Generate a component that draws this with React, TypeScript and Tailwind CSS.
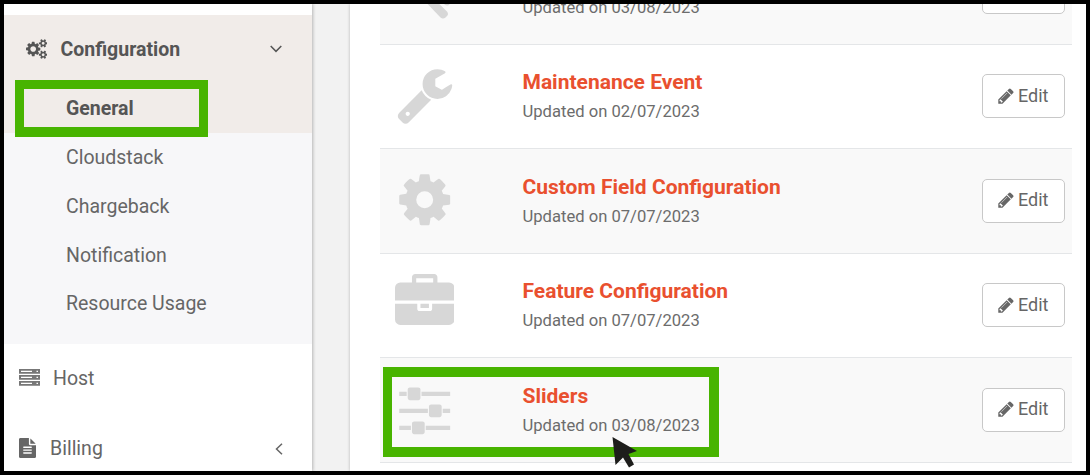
import type { ReactNode } from "react";

const WRENCH =
  "M448 1472q0-26-19-45t-45-19-45 19-19 45 19 45 45 19 45-19 19-45zm644-420l-682 682q-37 37-90 37-52 0-91-37l-106-108q-38-36-38-90 0-53 38-91l681-681q39 98 114.5 173.500t173.500 114.500zm634-435q0 39-23 106-47 134-164.500 217.500t-258.500 83.500q-185 0-316.500-131.500t-131.500-316.500 131.500-316.500 316.500-131.500q58 0 121.500 16.500t107.500 46.500q16 11 16 28t-16 28l-293 169v224l193 107q5-3 79-48.500t135.500-81 70.500-35.500q15 0 23.500 10t8.500 25z";
const COG =
  "M1152 896q0-106-75-181t-181-75-181 75-75 181 75 181 181 75 181-75 75-181zm512-109v222q0 12-8 23t-20 13l-185 28q-19 54-39 91 35 50 107 138 10 12 10 25t-9 23q-27 37-99 108t-94 71q-12 0-26-9l-138-108q-44 23-91 38-16 136-29 186-7 28-36 28h-222q-14 0-24.500-8.500t-11.500-21.500l-28-184q-49-16-90-37l-141 107q-10 9-25 9-14 0-25-11-126-114-165-168-7-10-7-23 0-12 8-23 15-21 51-66.500t54-70.500q-27-50-41-99l-183-27q-13-2-21-12.500t-8-23.500v-222q0-12 8-23t19-13l186-28q14-46 39-92-40-57-107-138-10-12-10-24 0-10 9-23 26-36 98.500-107.500t94.500-71.500q13 0 26 10l138 107q44-23 91-38 16-136 29-186 7-28 36-28h222q14 0 24.500 8.500t11.500 21.500l28 184q49 16 90 37l142-107q9-9 24-9 13 0 25 10 129 119 165 170 7 8 7 22 0 12-8 23-15 21-51 66.500t-54 70.500q26 50 41 98l183 28q13 2 21 12.500t8 23.500z";
const BRIEFCASE =
  "M640 256h512v-128h-512v128zm1152 640v480q0 66-47 113t-113 47h-1472q-66 0-113-47t-47-113v-480h672v160q0 26 19 45t45 19h320q26 0 45-19t19-45v-160h672zm-768 0v128h-256v-128h256zm768-480v384h-1792v-384q0-66 47-113t113-47h352v-160q0-40 28-68t68-28h576q40 0 68 28t28 68v160h352q66 0 113 47t47 113z";
const SLIDERS =
  "M480 1408v128h-352v-128h352zm352-128q26 0 45 19t19 45v256q0 26-19 45t-45 19h-256q-26 0-45-19t-19-45v-256q0-26 19-45t45-19h256zm160-384v128h-864v-128h864zm-640-512v128h-224v-128h224zm1312 1024v128h-736v-128h736zm-960-1152q26 0 45 19t19 45v256q0 26-19 45t-45 19h-256q-26 0-45-19t-19-45v-256q0-26 19-45t45-19h256zm640 512q26 0 45 19t19 45v256q0 26-19 45t-45 19h-256q-26 0-45-19t-19-45v-256q0-26 19-45t45-19h256zm320 128v128h-224v-128h224zm0-512v128h-864v-128h864z";
const PENCIL =
  "M491 1536l91-91-235-235-91 91v107h128v128h107zm523-928q0-22-22-22-10 0-17 7l-542 542q-7 7-7 17 0 22 22 22 10 0 17-7l542-542q7-7 7-17zm-54-192l416 416-832 832h-416v-416zm683 96q0 53-37 90l-166 166-416-416 166-165q36-38 90-38 53 0 91 38l235 234q37 39 37 91z";
const FILE =
  "M1596 476q14 14 28 36h-472v-472q22 14 36 28zm-476 164h544v1056q0 40-28 68t-68 28h-1344q-40 0-68-28t-28-68v-1600q0-40 28-68t68-28h800v544q0 40 28 68t68 28zM1280 1376v-64q0-14-9-23t-23-9h-704q-14 0-23 9t-9 23v64q0 14 9 23t23 9h704q14 0 23-9t9-23zM1280 1120v-64q0-14-9-23t-23-9h-704q-14 0-23 9t-9 23v64q0 14 9 23t23 9h704q14 0 23-9t9-23zM1280 864v-64q0-14-9-23t-23-9h-704q-14 0-23 9t-9 23v64q0 14 9 23t23 9h704q14 0 23-9t9-23z";
const BIG_GEAR =
  "M896 896q0-106-75-181t-181-75-181 75-75 181 75 181 181 75 181-75 75-181zM1280 805v185q0 10-7 19.500t-16 10.500l-155 24q-11 35-32 76 34 48 90 115 7 11 7 20 0 12-7 19-23 30-82.500 89.500t-78.500 59.500q-11 0-21-7l-115-90q-37 19-77 31-11 108-23 155-7 24-30 24h-186q-11 0-20-7.500t-10-17.500l-23-153q-34-10-75-31l-118 89q-7 7-20 7-11 0-21-8-144-133-144-160 0-9 7-19 10-14 41-53t47-61q-23-44-35-82l-152-24q-10-1-17-9.500t-7-19.500v-185q0-10 7-19.500t16-10.500l155-24q11-35 32-76-34-48-90-115-7-11-7-20 0-12 7-20 22-30 82-89t79-59q11 0 21 7l115 90q34-18 77-32 11-108 23-154 7-24 30-24h186q11 0 20 7.500t10 17.500l23 153q34 10 75 31l118-89q8-7 20-7 11 0 21 8 144 133 144 160 0 8-7 19-12 16-42 54t-45 60q23 48 34 82l152 23q10 2 17 10.500t7 19.500z";
const SMALL_GEAR =
  "M1664 1408q0-52-38-90t-90-38-90 38-38 90q0 53 37.500 90.500t90.500 37.500 90.500-37.500 37.500-90.500zM1920 1338v140q0 16-149 31-12 27-30 52 51 113 51 138 0 4-4 7-122 71-124 71-8 0-46-47t-52-68q-20 2-30 2t-30-2q-14 21-52 68t-46 47q-2 0-124-71-4-3-4-7 0-25 51-138-18-25-30-52-149-15-149-31v-140q0-16 149-31 13-29 30-52-51-113-51-138 0-4 4-7 4-2 35-20t59-34 30-16q8 0 46 46.500t52 67.500q20-2 30-2t30 2q51-71 92-112l6-2q4 0 124 70 4 3 4 7 0 25-51 138 17 23 30 52 149 15 149 31z";

function Icon({ d, className }: { d: string; className: string }) {
  return (
    <svg viewBox="0 0 1792 1792" className={className} fill="currentColor">
      <path fillRule="evenodd" d={d} />
    </svg>
  );
}

function ToolHandle() {
  return (
    <svg viewBox="0 0 60 60" className="size-[60px]" fill="currentColor">
      <path d="M23 33 32 31 52 50.500q2 2.500 0 4.500l-1.500 1.500q-2.500 2-5 0zM48 40h6.500v3.500q-2 2-5 0z" />
    </svg>
  );
}

function EditButton({ raised }: { raised?: boolean }) {
  return (
    <button
      className={
        raised
          ? "flex h-11 w-[83px] items-center rounded-[5px] border border-[#c8c8c8] bg-white pb-[2px] pl-[14px] text-[#666]"
          : "flex h-11 w-[83px] items-center rounded-[5px] border border-[#c8c8c8] bg-white pl-[14px] text-[#666]"
      }
    >
      <Icon d={PENCIL} className="size-[18px] shrink-0" />
      <span className="ml-[3px] text-[18px] leading-6">Edit</span>
    </button>
  );
}

type RowProps = { title?: string; date: string; icon: ReactNode; striped?: boolean };

function Row({ title, date, icon, striped }: RowProps) {
  return (
    <div
      className={
        striped
          ? "flex h-[105px] shrink-0 border-b border-[#e4e6e8] bg-[#f9f9f9]"
          : "flex h-[104px] shrink-0 border-b border-[#e4e6e8] bg-white"
      }
    >
      <div className="w-[142.500px] shrink-0 pt-[20.500px] pl-[15px] text-[#d7d7d7]">{icon}</div>
      <div className={striped ? "flex-1 pt-[25px]" : "flex-1 pt-[24px]"}>
        <div className="h-[27px] text-[21px] leading-[27px] font-bold text-[#e9502f]">{title}</div>
        <div className="pt-[5px] text-[16.600px] leading-[22px] text-[#6c6c6c]">{date}</div>
      </div>
      <div className={striped ? "w-[90px] shrink-0 pt-[30px]" : "w-[90px] shrink-0 pt-[29px]"}>
        <EditButton raised={striped} />
      </div>
    </div>
  );
}

function Sidebar() {
  return (
    <nav className="z-10 flex w-[308px] shrink-0 flex-col bg-white text-[19.5px] text-[#666] shadow-[1px_0_3px_rgba(0,0,0,0.25)]">
      <div className="h-[11px] shrink-0" />
      <div className="h-[118px] shrink-0 bg-[#f1ece9] font-bold text-[#555]">
        <div className="flex h-[68px] items-center pl-[21.500px]">
          <svg viewBox="0 0 1920 1792" className="mb-px h-5 w-[21.500px]" fill="currentColor">
            <path fillRule="evenodd" d={BIG_GEAR} />
            <path fillRule="evenodd" d={SMALL_GEAR} />
            <path fillRule="evenodd" d={SMALL_GEAR} transform="translate(0 -1024)" />
          </svg>
          <span className="ml-[13.500px] flex-1 pt-[2px]">Configuration</span>
          <svg viewBox="0 0 12 8" className="mr-[30px] h-2 w-3" fill="none" stroke="currentColor" strokeWidth="1.500">
            <path d="M0.700 1 6 6.400 11.300 1" />
          </svg>
        </div>
        <div className="flex h-[50px] items-center pt-[2px] pl-[62px]">General</div>
      </div>
      <div className="h-[211px] shrink-0 bg-[#f7f7f9] pl-[62px] leading-[49px]">
        <div>Cloudstack</div>
        <div>Chargeback</div>
        <div>Notification</div>
        <div className="-mt-px">Resource Usage</div>
      </div>
      <div className="flex h-[70px] shrink-0 items-center pl-[15px]">
        <svg viewBox="0 0 21 17" className="mb-[3px] h-[17px] w-[21px]" fill="#777">
          <path d="M0 0h21v4.700H0zM0 6h21v4.700H0zM0 12h21v4.700H0z" />
          <path d="M2 1.700h11v1.300H2zM2 7.700h11v1.300H2zM2 13.700h11v1.300H2zM17.500 1.700h1.500v1.300h-1.500zM17.500 7.700h1.500v1.300h-1.500zM17.500 13.700h1.500v1.300h-1.500z" fill="#fff" />
        </svg>
        <span className="ml-[13px]">Host</span>
      </div>
      <div className="flex h-[70px] shrink-0 items-center pl-[15px]">
        <svg viewBox="128 0 1536 1792" className="mb-[2px] h-5 w-[17px]" fill="currentColor">
          <path fillRule="evenodd" d={FILE} />
        </svg>
        <span className="ml-[14px] flex-1">Billing</span>
        <svg viewBox="0 0 8 12" className="mr-[29px] h-3 w-2" fill="none" stroke="currentColor" strokeWidth="1.500">
          <path d="M7 .7 1.500 6 7 11.300" />
        </svg>
      </div>
    </nav>
  );
}

export default function App() {
  return (
    <div className="relative h-[475px] w-[1090px] overflow-hidden bg-black p-1 font-[Roboto,sans-serif]">
      <div className="flex h-[467px] w-[1082px] overflow-hidden bg-[#f2f2f2]">
        <Sidebar />
        <main className="ml-[38px] flex flex-1 flex-col bg-white pr-[14px] pl-[30px] shadow-[0_0_3px_rgba(0,0,0,0.25)]">
          <div className="flex h-[41px] shrink-0 flex-col justify-end overflow-hidden">
            <Row striped date="Updated on 03/08/2023" icon={<ToolHandle />} />
          </div>
          <Row
            title="Maintenance Event"
            date="Updated on 02/07/2023"
            icon={<Icon d={WRENCH} className="-mt-[0.500px] size-[59.400px]" />}
          />
          <Row
            striped
            title="Custom Field Configuration"
            date="Updated on 07/07/2023"
            icon={<Icon d={COG} className="size-[59.400px]" />}
          />
          <Row
            title="Feature Configuration"
            date="Updated on 07/07/2023"
            icon={<Icon d={BRIEFCASE} className="-mt-[0.500px] size-[59.400px]" />}
          />
          <Row
            striped
            title="Sliders"
            date="Updated on 03/08/2023"
            icon={<Icon d={SLIDERS} className="size-[59.400px]" />}
          />
        </main>
      </div>
      <div className="absolute top-[80px] left-[15px] z-20 h-[57px] w-[193px] border-9 border-b-10 border-[#48b400]" />
      <div className="absolute top-[367px] left-[383px] z-20 h-[90px] w-[336px] border-10 border-l-9 border-[#48b400]" />
      <svg viewBox="0 0 26 32" className="absolute top-[437px] left-[612px] z-30 h-8 w-[26px]" fill="#1d1d1b">
        <path d="M.5 0 25 14 16.500 17 22 27.500 17 30.500 11 20.500 3.500 28z" />
      </svg>
    </div>
  );
}
